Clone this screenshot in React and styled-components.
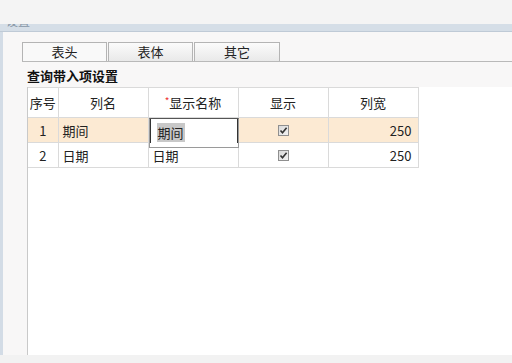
import React from "react";
import styled, { createGlobalStyle } from "styled-components";

const Global = createGlobalStyle`
  html, body { margin: 0; padding: 0; background: #f4f4f4; }
  body { font-family: "Noto Sans CJK SC", "Noto Sans", sans-serif; color: #222; }
  * { box-sizing: border-box; }
`;

const Page = styled.div`
  width: 512px;
  height: 363px;
  display: flex;
  flex-direction: column;
  overflow: hidden;
`;

const TopSpace = styled.div`
  height: 24px;
  background: #f4f4f4;
`;

const Band = styled.div`
  height: 8px;
  background: #d5dee7;
  border-bottom: 1px solid #bfcad6;
  overflow: hidden;
  padding-left: 6px;
`;

const BandText = styled.div`
  margin-top: -10px;
  font-size: 12px;
  line-height: 14px;
  color: #8796a6;
`;

const Body = styled.div`
  flex: 1;
  display: flex;
  flex-direction: column;
  background: #f8f7f7;
  border-left: 3px solid #d3dce6;
  padding-top: 10px;
`;

const TabBar = styled.div`
  display: flex;
  margin-left: 19px;
  border-bottom: 1px solid #b9b9b9;
  height: 20px;
`;

const Tab = styled.div`
  width: ${(p) => p.$w}px;
  height: 19px;
  margin-right: 1px;
  border: 1px solid #b4b4b4;
  border-bottom: none;
  background: ${(p) =>
    p.$active ? "#f9f9f9" : "linear-gradient(#fbfbfb, #e9e9e9)"};
  font-size: 13px;
  line-height: 18px;
  text-align: center;
  color: #222;
`;

const SectionTitle = styled.div`
  height: 25px;
  padding: 5px 0 0 24px;
  font-size: 13px;
  line-height: 18px;
  font-weight: bold;
  color: #111;
`;

const GridArea = styled.div`
  flex: 1;
  margin-left: 24px;
  background: #fff;
  border-left: 1px solid #c9c9c9;
`;

const Table = styled.table`
  border-collapse: collapse;
  table-layout: fixed;
  width: 390px;
  font-size: 13px;
  color: #222;
`;

const Th = styled.th`
  height: 30px;
  font-weight: normal;
  border: 1px solid #dadada;
  border-left: ${(p) => (p.$first ? "none" : "1px solid #dadada")};
  text-align: center;
  padding: 0;
  background: #fff;
`;

const Star = styled.span`
  color: #e33;
  font-size: 10px;
  vertical-align: 3px;
`;

const Tr = styled.tr`
  background: ${(p) => (p.$hl ? "#fcead3" : "#fff")};
`;

const Td = styled.td`
  height: 25px;
  padding: 0 ${(p) => (p.$align === "right" ? "6px" : "4px")};
  border: 1px solid #dadada;
  border-left: ${(p) => (p.$first ? "none" : "1px solid #dadada")};
  text-align: ${(p) => p.$align || "left"};
  position: relative;
  overflow: visible;
  white-space: nowrap;
`;

const Editor = styled.div`
  position: absolute;
  left: 0;
  top: 0;
  width: 90px;
  height: 30px;
  background: #fff;
  border: 1px solid #9a9a9a;
  border-top: 1px solid #555;
  z-index: 2;
`;

const EditorInner = styled.div`
  height: 24px;
  border-left: 1px solid #333;
  border-right: 1px solid #333;
  padding: 4px 0 0 6px;
`;

const Selected = styled.span`
  background: #c8c8c8;
  font-size: 13px;
  line-height: 17px;
  padding: 0 1px;
`;

const Check = () => (
  <svg width="11" height="11" viewBox="0 0 11 11" style={{ display: "block", margin: "0 auto" }}>
    <defs>
      <linearGradient id="cb" x1="0" y1="0" x2="1" y2="1">
        <stop offset="0" stopColor="#d8d8d8" />
        <stop offset="1" stopColor="#f4f4f4" />
      </linearGradient>
    </defs>
    <rect x="0.5" y="0.5" width="10" height="10" fill="url(#cb)" stroke="#8f8f8f" />
    <path d="M2.5 5.5 L4.5 7.8 L8.6 2.8" fill="none" stroke="#333" strokeWidth="1.6" />
  </svg>
);

const BottomStrip = styled.div`
  height: 8px;
  background: #f2f2f2;
`;

const rows = [
  { n: 1, name: "期间", disp: "期间", w: 250, hl: true, edit: true },
  { n: 2, name: "日期", disp: "日期", w: 250 },
];

export default function App() {
  return (
    <>
      <Global />
      <Page>
        <TopSpace />
        <Band>
          <BandText>设置</BandText>
        </Band>
        <Body>
          <TabBar>
            <Tab $w={85} $active>表头</Tab>
            <Tab $w={85}>表体</Tab>
            <Tab $w={86}>其它</Tab>
          </TabBar>
          <SectionTitle>查询带入项设置</SectionTitle>
          <GridArea>
            <Table>
              <colgroup>
                <col style={{ width: 30 }} />
                <col style={{ width: 90 }} />
                <col style={{ width: 90 }} />
                <col style={{ width: 90 }} />
                <col style={{ width: 90 }} />
              </colgroup>
              <thead>
                <tr>
                  <Th $first>序号</Th>
                  <Th>列名</Th>
                  <Th>
                    <Star>*</Star>显示名称
                  </Th>
                  <Th>显示</Th>
                  <Th>列宽</Th>
                </tr>
              </thead>
              <tbody>
                {rows.map((r) => (
                  <Tr key={r.n} $hl={r.hl}>
                    <Td $first $align="center">{r.n}</Td>
                    <Td>{r.name}</Td>
                    <Td>
                      {r.edit ? (
                        <Editor>
                          <EditorInner>
                            <Selected>{r.disp}</Selected>
                          </EditorInner>
                        </Editor>
                      ) : (
                        r.disp
                      )}
                    </Td>
                    <Td $align="center">
                      <Check />
                    </Td>
                    <Td $align="right">{r.w}</Td>
                  </Tr>
                ))}
              </tbody>
            </Table>
          </GridArea>
        </Body>
        <BottomStrip />
      </Page>
    </>
  );
}
